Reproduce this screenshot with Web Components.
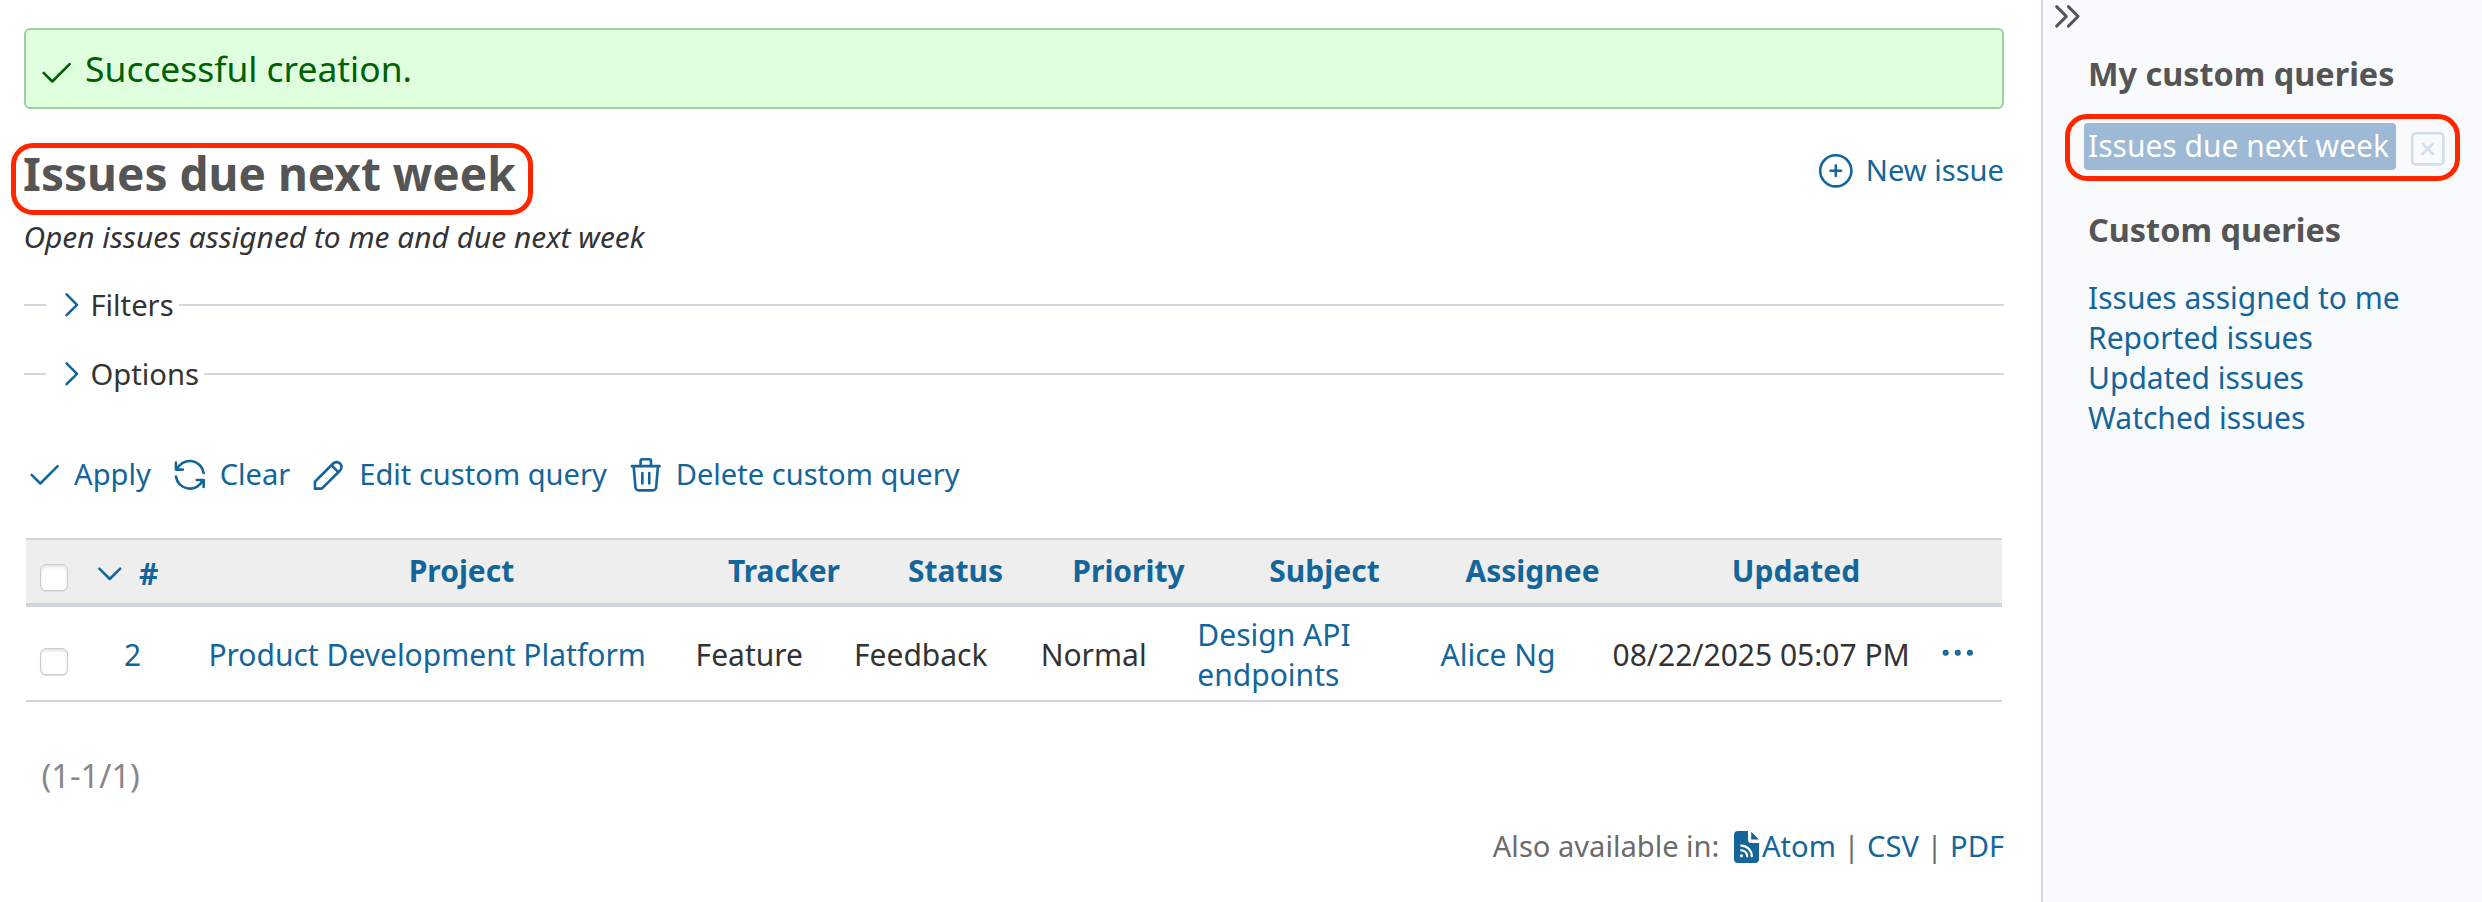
<!DOCTYPE html>
<html lang="en">
<head>
<meta charset="utf-8">
<title>Issues due next week</title>
<style>
  body { margin: 0; font-family: "Noto Sans", sans-serif; color: #333; background: #fff; --link: #13659a; --line: #d0d7de; }
</style>
</head>
<body>
<issues-app></issues-app>
<script>
const ICONS = {
  check: '<path d="M5 12l5 5l10 -10"/>',
  plus: '<path d="M3 12a9 9 0 1 0 18 0a9 9 0 0 0 -18 0M9 12h6M12 9v6"/>',
  right: '<path d="M9 6l6 6l-6 6"/>',
  down: '<path d="M6 9l6 6l6 -6"/>',
  collapse: '<path d="M7 7l5 5l-5 5M13 7l5 5l-5 5"/>',
  reload: '<path d="M20 11a8.1 8.1 0 0 0 -15.5 -2m-.5 -4v4h4"/><path d="M4 13a8.1 8.1 0 0 0 15.5 2m.5 4v-4h-4"/>',
  edit: '<path d="M4 20h4l10.5 -10.5a2.828 2.828 0 1 0 -4 -4l-10.5 10.5v4M13.5 6.5l4 4"/>',
  del: '<path d="M4 7h16M10 11v6M14 11v6M5 7l1 12a2 2 0 0 0 2 2h8a2 2 0 0 0 2 -2l1 -12M9 7v-3a1 1 0 0 1 1 -1h4a1 1 0 0 1 1 1v3"/>',
  dots: '<path d="M4 12a1 1 0 1 0 2 0a1 1 0 1 0 -2 0M11 12a1 1 0 1 0 2 0a1 1 0 1 0 -2 0M18 12a1 1 0 1 0 2 0a1 1 0 1 0 -2 0"/>',
  clear: '<path d="M3 5a2 2 0 0 1 2 -2h14a2 2 0 0 1 2 2v14a2 2 0 0 1 -2 2h-14a2 2 0 0 1 -2 -2zM9 9l6 6m0 -6l-6 6"/>'
};

function define(name, html) {
  const tpl = document.createElement('template');
  tpl.innerHTML = html;
  customElements.define(name, class extends HTMLElement {
    constructor() {
      super();
      this.attachShadow({ mode: 'open' }).append(tpl.content.cloneNode(true));
    }
  });
}

customElements.define('ui-icon', class extends HTMLElement {
  connectedCallback() {
    if (this.shadowRoot) return;
    this.attachShadow({ mode: 'open' }).innerHTML = `
      <style>
        :host { display: block; flex: none; width: 41.6px; height: 41.6px; color: var(--link); }
        svg { display: block; width: 100%; height: 100%; fill: none; stroke: currentColor; stroke-width: 1.5; stroke-linecap: round; stroke-linejoin: round; }
      </style>
      <svg viewBox="0 0 24 24">${ICONS[this.getAttribute('name')]}</svg>`;
  }
});

define('icon-link', `
  <style>
    :host { display: flex; align-items: center; gap: 9.5px; font-size: 29.1px; line-height: 42px; color: var(--link); white-space: nowrap; }
    span { margin-top: -2px; }
  </style>
  <slot name="icon"></slot><span><slot></slot></span>`);

define('flash-notice', `
  <style>
    :host { display: flex; align-items: center; box-sizing: border-box; height: 81px; padding-left: 9px; gap: 8.5px;
      border: 2px solid #9fcf9f; border-radius: 6px; background: #dfffdf; color: #005f00; font-size: 35.4px; line-height: 50px; }
    ui-icon { color: #005f00; margin-top: 8px; }
    span { margin-top: -1px; }
  </style>
  <ui-icon name="check"></ui-icon><span><slot></slot></span>`);

define('page-title', `
  <style>
    :host { display: flex; justify-content: space-between; height: 72px; }
    h2 { position: relative; margin: 0 0 0 -1px; font-size: 46px; line-height: 61px; color: #555; }
    .mark { position: absolute; left: -12px; top: 0; width: 522px; height: 72px; box-sizing: border-box; border: 5px solid #ff2600; border-radius: 22px; }
    icon-link { height: 42px; margin-top: 7px; }
  </style>
  <h2><slot></slot><span class="mark"></span></h2>
  <icon-link><ui-icon slot="icon" name="plus"></ui-icon>New issue</icon-link>`);

define('fold-section', `
  <style>
    :host { display: flex; align-items: center; height: 69px; font-size: 29.2px; line-height: 40px; }
    .lead, .rest { height: 2px; background: var(--line); }
    .lead { width: 22px; margin-right: 5px; }
    .rest { flex: 1; margin-left: 5px; }
    span { margin: 1px 0 0 -2.2px; }
  </style>
  <div class="lead"></div><ui-icon name="right"></ui-icon><span><slot></slot></span><div class="rest"></div>`);

define('check-box', `
  <style>
    :host { display: block; box-sizing: border-box; width: 28px; height: 27px; border: 1.5px solid #cdcdcd; border-radius: 6px;
      background: #fff; box-shadow: inset 0 2px 3px #e2e2e2, 0 1px 1px #ddd; }
  </style>`);

define('issue-table', `
  <style>
    :host { display: block; margin: 0 2px; border-top: 2px solid #d0d7de; border-bottom: 2px solid #d0d7de; font-size: 30px; line-height: 40px; white-space: nowrap; }
    .head, .row { display: grid; align-items: center; }
    .head { grid-template-columns: 56px 128px 503px 142px 201px 145px 247px 169px 358px 27px; height: 63px;
      background: #eee; border-bottom: 4px solid #d0d5e0; color: var(--link); font-weight: bold; text-align: center; }
    .head .sort { display: flex; align-items: center; margin: 5px 0 0 6.9px; gap: 8.5px; }
    .row { grid-template-columns: 98px 84.4px 487.2px 158.4px 186.7px 156.7px 243.2px 172px 324.2px 1fr; height: 93px; }
    .row > span { margin-top: 4px; }
    check-box { margin: 12px 0 0 14px; }
    .row check-box { margin-top: 16px; }
    a { color: var(--link); }
  </style>
  <div class="head">
    <check-box></check-box>
    <div class="sort"><ui-icon name="down"></ui-icon>#</div>
    <span>Project</span><span>Tracker</span><span>Status</span><span>Priority</span><span>Subject</span><span>Assignee</span><span>Updated</span>
  </div>
  <div class="row">
    <check-box></check-box>
    <span><a>2</a></span><span><a>Product Development Platform</a></span><span>Feature</span><span>Feedback</span><span>Normal</span>
    <span><a>Design API<br>endpoints</a></span><span><a>Alice Ng</a></span><span>08/22/2025 05:07 PM</span><ui-icon name="dots"></ui-icon>
  </div>`);

define('other-formats', `
  <style>
    :host { display: block; text-align: right; font-size: 29.1px; line-height: 40px; color: #6c6c6c; }
    a { color: var(--link); }
    svg { display: inline-block; width: 25px; height: 32px; margin: 0 3px 0 7px; vertical-align: -6px; }
  </style>
  Also available in: <a><svg viewBox="0 0 25 32"><path fill="#13659a" d="M4 0H14V8.500A3.500 3.500 0 0 0 17.500 12H25V28A4 4 0 0 1 21 32H4A4 4 0 0 1 0 28V4A4 4 0 0 1 4 0ZM17.200 0.700L25 8.500H17.200Z"/><g fill="none" stroke="#fff" stroke-width="2.200" stroke-linecap="round"><path d="M7.200 19.300A6 6 0 0 1 13.200 25.300M7.200 14.700A10.600 10.600 0 0 1 17.800 25.300"/></g><circle cx="7.500" cy="24.800" r="1.600" fill="#fff"/></svg>Atom</a> | <a>CSV</a> | <a>PDF</a>`);

define('query-sidebar', `
  <style>
    :host { display: block; box-sizing: border-box; width: 441px; height: 902px; border-left: 2px solid var(--line); background: #f9fafc; padding-left: 45px; font-size: 30px; line-height: 40px; white-space: nowrap; }
    .toggle { display: flex; align-items: center; height: 33px; margin-left: -45.200px; }
    .toggle ui-icon { width: 46.800px; height: 46.800px; color: #555; }
    h3 { margin: 0; font-size: 32.400px; line-height: 44px; color: #555; }
    .mine { padding-top: 18px; }
    .current { position: relative; display: flex; align-items: flex-start; margin: 28px 0 0 -4px; height: 47px; }
    .current a { box-sizing: border-box; width: 312px; height: 47px; padding-left: 4px; line-height: 46px; border-radius: 4px; background: #9db9d5; color: #fff; }
    .current ui-icon { color: #d0dfeb; margin: 5px 0 0 10.900px; }
    .mark { position: absolute; left: -19px; top: -9px; width: 395px; height: 67px; box-sizing: border-box; border: 5px solid #ff2600; border-radius: 22px; }
    .shared { padding-top: 37px; }
    .list { display: flex; flex-direction: column; margin-top: 27px; color: var(--link); }
  </style>
  <div class="toggle"><ui-icon name="collapse"></ui-icon></div>
  <h3 class="mine">My custom queries</h3>
  <div class="current"><a>Issues due next week</a><ui-icon name="clear"></ui-icon><span class="mark"></span></div>
  <h3 class="shared">Custom queries</h3>
  <div class="list"><a>Issues assigned to me</a><a>Reported issues</a><a>Updated issues</a><a>Watched issues</a></div>`);

define('issues-app', `
  <style>
    :host { display: flex; height: 902px; overflow: hidden; }
    main { box-sizing: border-box; width: 2041px; padding: 28px 37px 0 24px; }
    page-title { margin-top: 34px; }
    .about { margin: 2px 0 13px -0.500px; font-size: 29.900px; line-height: 40px; font-style: italic; }
    .tools { display: flex; gap: 17.800px; margin: 46px 0 42px -1px; }
    .pager { margin: 52px 0 0 17.500px; font-size: 32.700px; line-height: 44px; color: #888; }
    other-formats { margin-top: 28px; }
  </style>
  <main>
    <flash-notice>Successful creation.</flash-notice>
    <page-title>Issues due next week</page-title>
    <div class="about">Open issues assigned to me and due next week</div>
    <fold-section>Filters</fold-section>
    <fold-section>Options</fold-section>
    <div class="tools">
      <icon-link><ui-icon slot="icon" name="check"></ui-icon>Apply</icon-link>
      <icon-link><ui-icon slot="icon" name="reload"></ui-icon>Clear</icon-link>
      <icon-link><ui-icon slot="icon" name="edit"></ui-icon>Edit custom query</icon-link>
      <icon-link><ui-icon slot="icon" name="del"></ui-icon>Delete custom query</icon-link>
    </div>
    <issue-table></issue-table>
    <div class="pager">(1-1/1)</div>
    <other-formats></other-formats>
  </main>
  <query-sidebar></query-sidebar>`);
</script>
</body>
</html>
